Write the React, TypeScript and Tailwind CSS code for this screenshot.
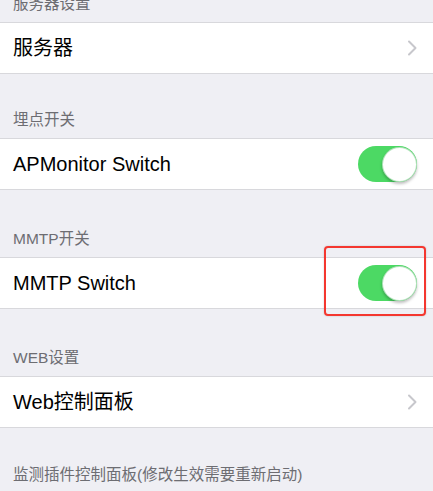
import React from "react";

const font = { fontFamily: '"Liberation Sans", "Noto Sans CJK SC", sans-serif' };

function Chevron() {
  return (
    <svg width="10" height="16" viewBox="0 0 10 16" className="shrink-0">
      <path d="M2 1.5 L8.5 8 L2 14.5" fill="none" stroke="#c7c7cc" strokeWidth="2" strokeLinecap="round" strokeLinejoin="round" />
    </svg>
  );
}

function Toggle() {
  return (
    <div className="relative w-[59px] h-[36px] rounded-full bg-[#4cd964] shrink-0">
      <div className="absolute right-[0px] top-[0.5px] w-[35px] h-[35px] rounded-full bg-white border border-[#3fb855]/40 shadow-[0_2px_3px_rgba(0,0,0,0.25)]" />
    </div>
  );
}

function Header({ text, h }: { text: string; h: string }) {
  return (
    <div className={`${h} flex items-end pl-[13px] pb-[8px] overflow-hidden`}>
      <span className="text-[15.5px] leading-[20px] text-[#6d6d72] whitespace-nowrap">{text}</span>
    </div>
  );
}

function Cell({ label, right }: { label: string; right: React.ReactNode }) {
  return (
    <div className="h-[52px] bg-white border-y border-[#d8d8dc] flex items-center justify-between pl-[13px] pr-[16px]">
      <span className="text-[20px] text-black whitespace-nowrap">{label}</span>
      {right}
    </div>
  );
}

export default function App() {
  return (
    <div className="relative w-[433px] h-[491px] bg-[#efeff4] overflow-hidden" style={font}>
      <Header text="服务器设置" h="h-[22px]" />
      <Cell label="服务器" right={<Chevron />} />
      <Header text="埋点开关" h="h-[64px]" />
      <Cell label="APMonitor Switch" right={<Toggle />} />
      <Header text="MMTP开关" h="h-[67px]" />
      <Cell label="MMTP Switch" right={<Toggle />} />
      <Header text="WEB设置" h="h-[67px]" />
      <Cell label="Web控制面板" right={<Chevron />} />
      <Header text="监测插件控制面板(修改生效需要重新启动)" h="h-[65px]" />
      <div className="absolute left-[324px] top-[246px] w-[102px] h-[70px] border-[2.5px] border-[#f4372f] rounded-[4px] shadow-[0_0_2px_rgba(0,0,0,0.2)]" />
    </div>
  );
}
